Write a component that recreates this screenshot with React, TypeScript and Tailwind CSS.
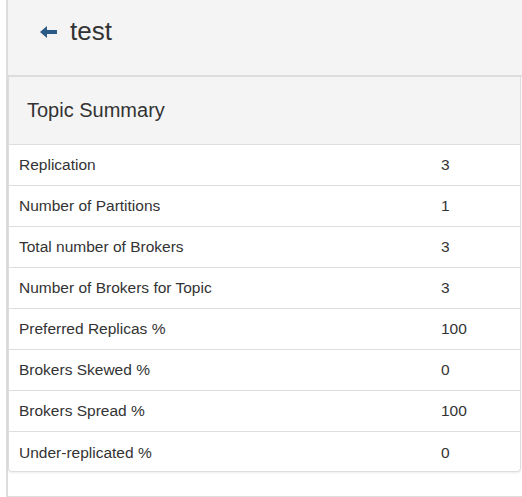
import React from "react";

const rows: [string, string][] = [
  ["Replication", "3"],
  ["Number of Partitions", "1"],
  ["Total number of Brokers", "3"],
  ["Number of Brokers for Topic", "3"],
  ["Preferred Replicas %", "100"],
  ["Brokers Skewed %", "0"],
  ["Brokers Spread %", "100"],
  ["Under-replicated %", "0"],
];

export default function App() {
  return (
    <div
      className="w-[522px] h-[497px] bg-white text-[#333] overflow-hidden"
      style={{ fontFamily: '"Liberation Sans", Arial, sans-serif' }}
    >
      <div className="ml-[6px] border-l-2 border-[#dddddd] h-full flex flex-col">
        <div className="h-[77px] bg-[#f4f4f4] border-b-2 border-[#dddddd] flex items-start pt-[14px] pl-[32px]">
          <div className="flex items-center h-[34px]">
            <svg width="17" height="12" viewBox="0 0 17 12" className="mr-[13px] mt-[1px]">
              <path d="M0 6 L7 0 L7 4 L17 4 L17 8 L7 8 L7 12 Z" fill="#2a5a86" />
            </svg>
            <span className="text-[26px] leading-[34px]">test</span>
          </div>
        </div>
        <div className="mr-[1px] border border-t-0 border-[#dddddd] rounded-b-[4px] shadow-[0_1px_2px_rgba(0,0,0,0.08)] overflow-hidden">
          <div className="h-[68px] bg-[#f4f4f4] border-b border-[#dddddd] flex items-center pl-[18px]">
            <span className="text-[20px] leading-[28px]">Topic Summary</span>
          </div>
          {rows.map(([label, value], i) => (
            <div
              key={label}
              className={`flex h-[41px] items-center text-[15.5px] ${i < rows.length - 1 ? "border-b border-[#dddddd]" : "h-[40px]"}`}
            >
              <div className="w-[432px] pl-[10px]">{label}</div>
              <div className="flex-1">{value}</div>
            </div>
          ))}
        </div>
        <div className="mt-[24px] border-t border-[#dddddd]" />
      </div>
    </div>
  );
}
